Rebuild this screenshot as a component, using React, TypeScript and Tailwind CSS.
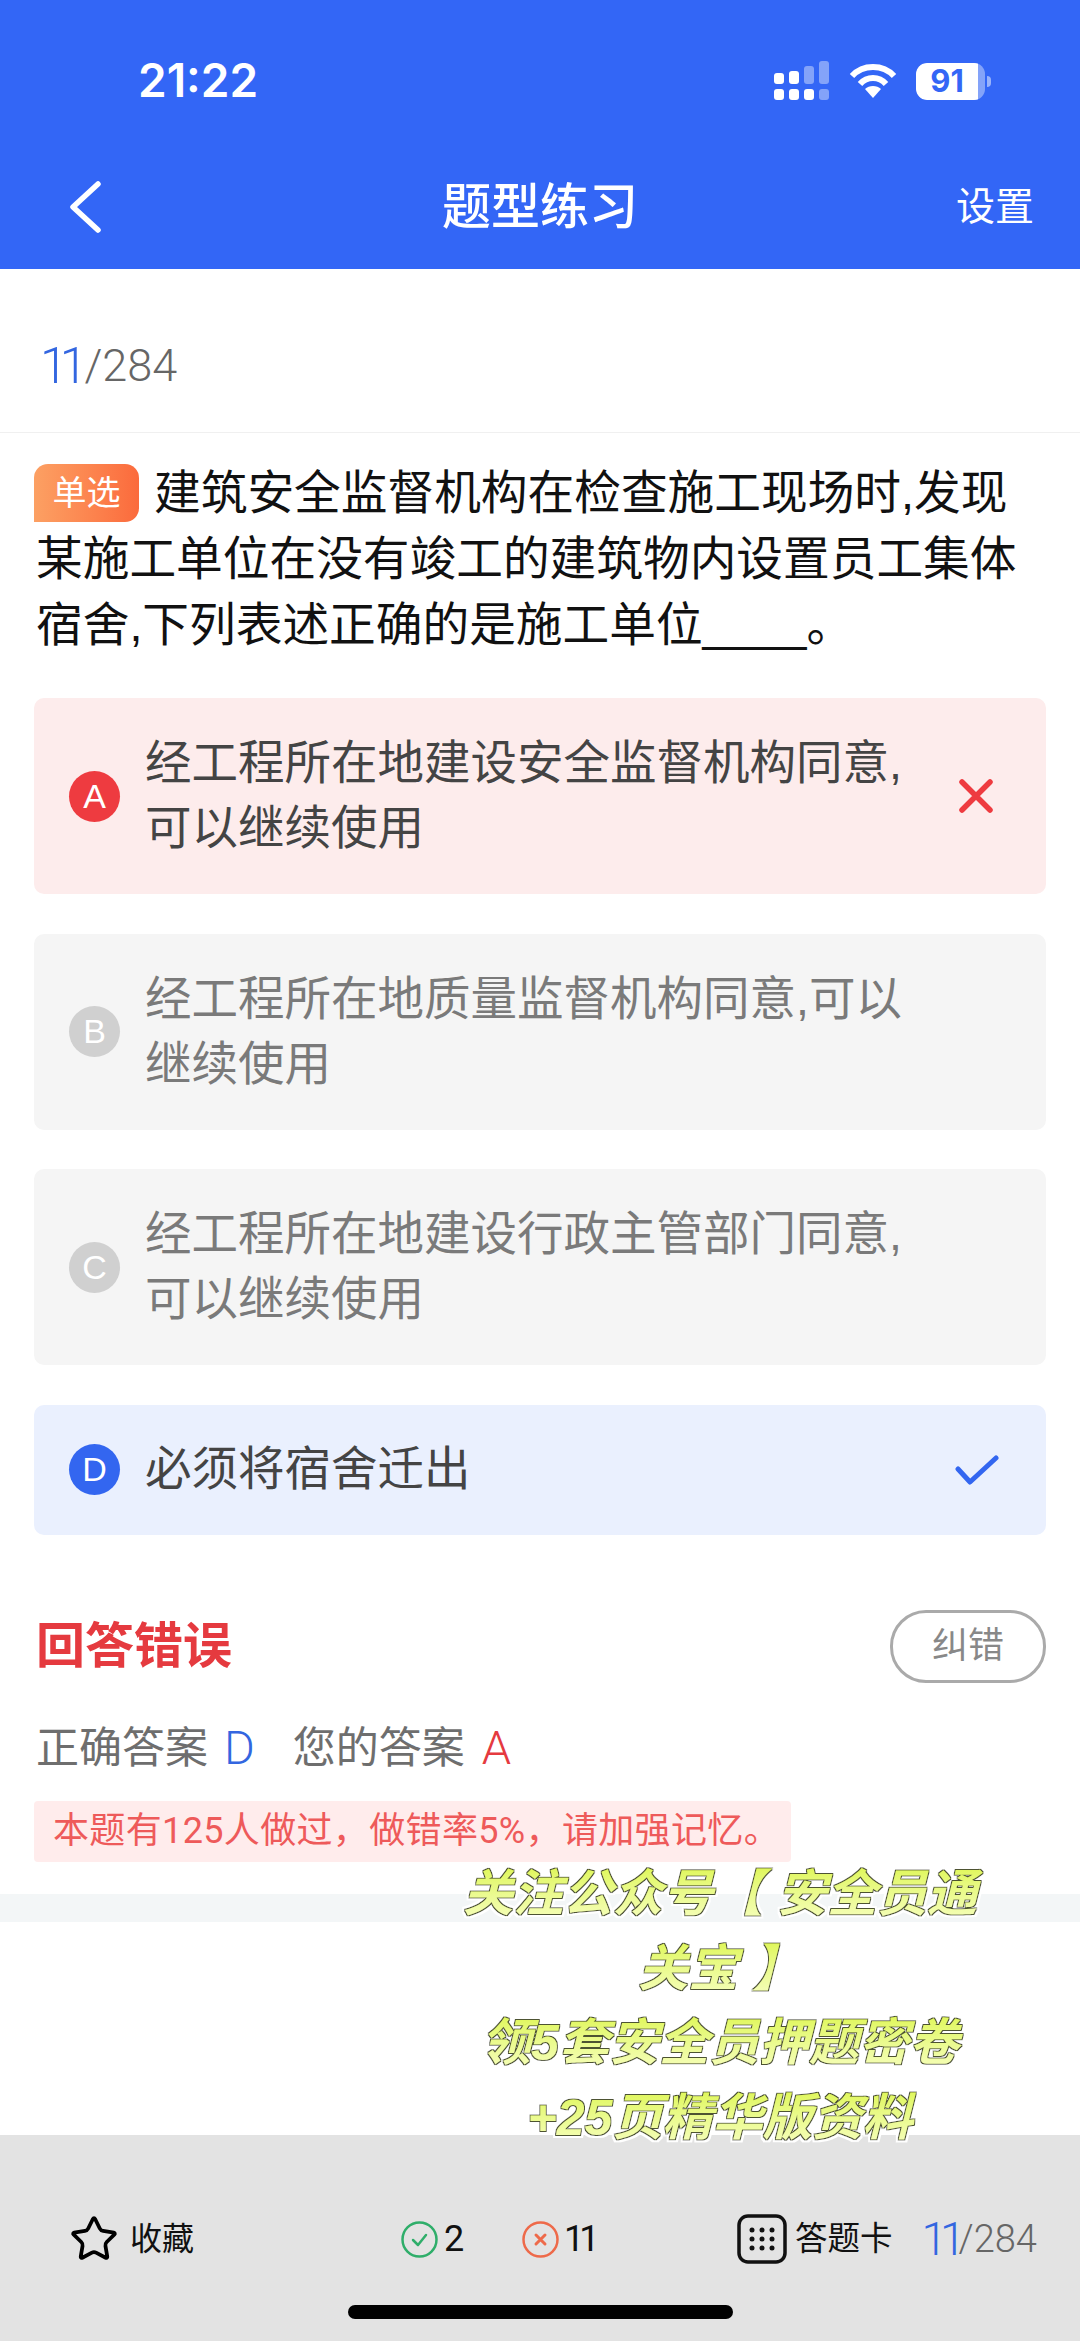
import { Star } from "lucide-react";

const FONT = "[font-family:'Liberation_Sans','Noto_Sans_CJK_SC',sans-serif]";
const DIGITS = "[font-family:'Roboto',sans-serif]";

function StatusIcons() {
  return (
    <div className="flex items-center">
      <svg width="58" height="40" viewBox="0 0 58 40" fill="#fff">
        <rect x="0" y="12" width="10" height="11" rx="3" />
        <rect x="15" y="10" width="10" height="13" rx="3" />
        <rect x="30" y="5" width="10" height="18" rx="3" opacity="0.4" />
        <rect x="45" y="0" width="10" height="23" rx="3" opacity="0.4" />
        <rect x="0" y="28" width="10" height="11" rx="3" />
        <rect x="15" y="28" width="10" height="11" rx="3" />
        <rect x="30" y="28" width="10" height="11" rx="3" />
        <rect x="45" y="28" width="10" height="11" rx="3" opacity="0.4" />
      </svg>
      <svg className="ml-[17px]" width="48" height="36" viewBox="0 0 48 36" fill="none" stroke="#fff" strokeWidth="6">
        <path d="M3 13 C14 1 34 1 45 13" />
        <path d="M11 21 C18 13 30 13 37 21" />
        <path d="M16 26 L24 35 L32 26 C28 22 20 22 16 26 Z" fill="#fff" stroke="none" />
      </svg>
      <div className="ml-[19px] flex h-[37px] w-[69px] items-center overflow-hidden rounded-[11px] bg-white/40">
        <div className="flex h-full w-[62px] items-center justify-center rounded-l-[11px] bg-white text-[31px] font-bold text-[#3366f6] [font-family:'Inter',sans-serif]">
          91
        </div>
      </div>
      <div className="ml-[2px] h-[11px] w-[4px] rounded-r-full bg-white/50" />
    </div>
  );
}

function Option({
  letter,
  lines,
  tone,
}: {
  letter: string;
  lines: string[];
  tone: "wrong" | "right" | "idle";
}) {
  const box =
    tone === "wrong" ? "bg-[#fdecec]" : tone === "right" ? "bg-[#eaf0fe]" : "bg-[#f5f5f5]";
  const dot =
    tone === "wrong" ? "bg-[#ee3b40]" : tone === "right" ? "bg-[#3366f0]" : "bg-[#d0d0d0]";
  const text = tone === "idle" ? "text-[#7a7a7a]" : "text-[#444444]";

  return (
    <div className={`flex items-center rounded-[10px] px-[35px] py-[10px] ${box} ${lines.length > 1 ? "h-[196px]" : "h-[130px]"}`}>
      <div className={`flex h-[51px] w-[51px] shrink-0 items-center justify-center rounded-full text-[34px] text-white ${dot}`}>
        {letter}
      </div>
      <div className={`ml-[25px] flex-1 text-[46.5px] leading-[65px] ${text}`}>
        {lines.map((l) => (
          <div key={l}>{l}</div>
        ))}
      </div>
      {tone === "wrong" && (
        <svg className="mr-[17px]" width="36" height="36" viewBox="0 0 36 36" fill="none" stroke="#ee3b40" strokeWidth="5.5" strokeLinecap="round">
          <path d="M4 4 L32 32 M32 4 L4 32" />
        </svg>
      )}
      {tone === "right" && (
        <svg className="mr-[12px]" width="44" height="30" viewBox="0 0 44 30" fill="none" stroke="#3366f0" strokeWidth="5" strokeLinecap="round" strokeLinejoin="round">
          <path d="M3 14 L15 27 L41 3" />
        </svg>
      )}
    </div>
  );
}

function PromoLine({ children }: { children: string }) {
  return (
    <div className="h-[74.5px] whitespace-nowrap text-center">
      <span className="inline-block bg-gradient-to-b from-[#dcf53c] to-[#faffc8] bg-clip-text px-[8px] text-[50px] font-bold italic leading-[74px] text-transparent [filter:url(#promo)]">
        {children}
      </span>
    </div>
  );
}

export default function App() {
  return (
    <div className={`relative flex h-[2341px] w-[1080px] flex-col overflow-hidden bg-white ${FONT}`}>
      {/* gives the promo text its dark outline + white glow */}
      <svg width="0" height="0" className="absolute">
        <filter id="promo" x="-5%" y="-15%" width="110%" height="130%">
          <feMorphology in="SourceAlpha" operator="dilate" radius="1.2" result="edge" />
          <feFlood floodColor="#4e5330" />
          <feComposite in2="edge" operator="in" result="outline" />
          <feMorphology in="SourceAlpha" operator="dilate" radius="2.5" result="wide" />
          <feFlood floodColor="#ffffff" />
          <feComposite in2="wide" operator="in" result="glow" />
          <feMerge>
            <feMergeNode in="glow" />
            <feMergeNode in="outline" />
            <feMergeNode in="SourceGraphic" />
          </feMerge>
        </filter>
      </svg>

      <header className="h-[269px] shrink-0 bg-[#3366f6] text-white">
        <div className="flex items-start justify-between pl-[138px] pr-[89px] pt-[57px]">
          <span className="text-[46px] font-semibold leading-[46px] [font-family:'Inter',sans-serif]">21:22</span>
          <div className="pt-[4px]">
            <StatusIcons />
          </div>
        </div>
        <div className="mt-[78px] flex items-center justify-between pl-[69px] pr-[46px]">
          <div className="w-[177px]">
            <svg width="32" height="52" viewBox="0 0 32 52" fill="none" stroke="#fff" strokeWidth="5.5" strokeLinecap="round" strokeLinejoin="round">
              <path d="M29 3 L4 26 L29 49" />
            </svg>
          </div>
          <div className="text-[49px] font-medium leading-[52px]">题型练习</div>
          <div className="w-[200px] text-right text-[39px] leading-[52px]">设置</div>
        </div>
      </header>

      <div className={`flex h-[164px] shrink-0 items-center gap-[5px] border-b border-[#f0f0f0] pl-[40px] pt-[30px] ${DIGITS}`}>
        <span className="text-[50px] font-light leading-[50px] tracking-[-8px] text-[#3366e0]">11</span>
        <span className="text-[45px] font-light leading-[50px] text-[#666666]">/284</span>
      </div>

      <div className="pl-[36px] pr-[34px] pt-[27px] text-[46.7px] leading-[66px] text-[#111111]">
        <span className="-ml-[2px] mr-[15px] inline-flex h-[58px] w-[105px] items-center justify-center rounded-[14px] rounded-bl-none bg-gradient-to-r from-[#fca063] to-[#fb6a3c] align-[4px] text-[34px] leading-none text-white">
          单选
        </span>
        建筑安全监督机构在检查施工现场时,发现某施工单位在没有竣工的建筑物内设置员工集体宿舍,下列表述正确的是施工单位____。
      </div>

      <div className="mt-[40px] flex flex-col gap-[39.5px] pl-[34px] pr-[34px]">
        <Option letter="A" tone="wrong" lines={["经工程所在地建设安全监督机构同意,", "可以继续使用"]} />
        <Option letter="B" tone="idle" lines={["经工程所在地质量监督机构同意,可以", "继续使用"]} />
        <Option letter="C" tone="idle" lines={["经工程所在地建设行政主管部门同意,", "可以继续使用"]} />
        <Option letter="D" tone="right" lines={["必须将宿舍迁出"]} />
      </div>

      <div className="mt-[75px] flex items-center justify-between pl-[36px] pr-[34px]">
        <span className="text-[49px] font-bold leading-[60px] text-[#e53a3f]">回答错误</span>
        <span className="flex h-[73px] w-[156px] items-center justify-center rounded-[36px] border-[3px] border-[#aaaaaa] text-[36px] text-[#888888]">
          纠错
        </span>
      </div>

      <div className="mt-[34px] flex items-center pl-[36px] text-[43px] leading-[62px] text-[#6e6e6e]">
        <span>正确答案</span>
        <span className={`ml-[16px] text-[47px] font-light text-[#3366e0] ${DIGITS}`}>D</span>
        <span className="ml-[38px]">您的答案</span>
        <span className={`ml-[17px] text-[47px] font-light text-[#e53a3f] ${DIGITS}`}>A</span>
      </div>

      <div className="ml-[34px] mt-[22px] flex h-[61px] w-[757px] items-center rounded-[4px] bg-[#ffecec] pl-[19px] text-[36px] tracking-[0.35px] text-[#ee5a5a] [font-family:'Roboto','Noto_Sans_CJK_SC',sans-serif]">
        本题有125人做过，做错率5%，请加强记忆。
      </div>

      <div className="mt-[32px] h-[28px] bg-[#f3f6f7]" />

      <div className="flex-1" />

      <footer className="relative flex h-[206px] shrink-0 items-start bg-[#e3e3e3] pl-[69px] pt-[79px]">
        <div className="flex w-[332px] shrink-0 items-center">
          <Star className="h-[50px] w-[50px] text-black" strokeWidth={1.8} />
          <span className="ml-[11px] text-[32px] leading-[50px] text-[#111111]">收藏</span>
        </div>
        <div className={`flex w-[336px] shrink-0 items-center text-[36px] leading-[50px] text-[#111111] ${DIGITS}`}>
          <svg width="37" height="37" viewBox="0 0 37 37" fill="none" stroke="#2fae6a" strokeWidth="2.5" strokeLinecap="round" strokeLinejoin="round">
            <circle cx="18.5" cy="18.5" r="17" />
            <path d="M12 19 L17 24 L25 14" />
          </svg>
          <span className="ml-[6px] w-[78px]">2</span>
          <svg width="37" height="37" viewBox="0 0 37 37" fill="none" stroke="#ee6a4a" strokeWidth="2.5" strokeLinecap="round">
            <circle cx="18.5" cy="18.5" r="17" />
            <path d="M14 14 L23 23 M23 14 L14 23" strokeWidth="3" />
          </svg>
          <span className="ml-[5px] tracking-[-5px]">11</span>
        </div>
        <div className="flex shrink-0 items-center whitespace-nowrap">
          <svg width="50" height="50" viewBox="0 0 50 50" fill="none">
            <rect x="2" y="2" width="46" height="46" rx="9" stroke="#111" strokeWidth="3.5" />
            <g fill="#111">
              <circle cx="15" cy="16" r="2.5" /><circle cx="25" cy="16" r="2.5" /><circle cx="35" cy="16" r="2.5" />
              <circle cx="15" cy="25" r="2.5" /><circle cx="25" cy="25" r="2.5" /><circle cx="35" cy="25" r="2.5" />
              <circle cx="15" cy="34" r="2.5" /><circle cx="25" cy="34" r="2.5" /><circle cx="35" cy="34" r="2.5" />
            </g>
          </svg>
          <span className="ml-[8px] text-[32.5px] leading-[50px] text-[#111111]">答题卡</span>
          <span className={`ml-[29px] text-[46px] font-light leading-[50px] tracking-[-7px] text-[#3366e0] ${DIGITS}`}>11</span>
          <span className={`text-[38px] font-light leading-[50px] text-[#666666] ${DIGITS}`}>/284</span>
        </div>
        <div className="absolute bottom-[22px] left-[348px] h-[14px] w-[385px] rounded-full bg-black" />
      </footer>

      <div className="absolute left-[450px] top-[1857px] w-[540px]">
        <PromoLine>关注公众号【 安全员通</PromoLine>
        <PromoLine>关宝 】</PromoLine>
        <PromoLine>领5套安全员押题密卷</PromoLine>
        <PromoLine>+25页精华版资料</PromoLine>
      </div>
    </div>
  );
}
